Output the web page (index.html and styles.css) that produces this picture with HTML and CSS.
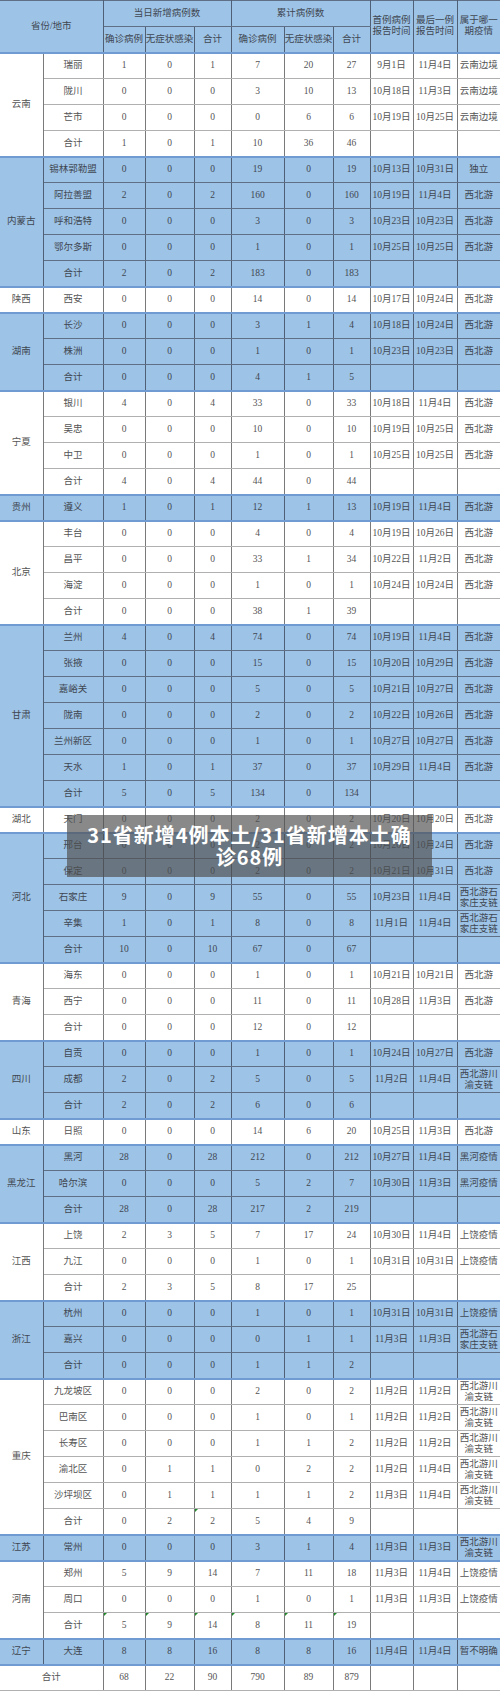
FILE: index.html
```html
<!DOCTYPE html>
<html lang="zh-CN">
<head>
<meta charset="utf-8">
<title>31省新增4例本土</title>
<link rel="stylesheet" href="styles.css">
</head>
<body>
<table class="t">
<colgroup>
<col class="c1"><col class="c2"><col class="c3"><col class="c4"><col class="c5"><col class="c6"><col class="c7"><col class="c8"><col class="c9"><col class="c10"><col class="c11">
</colgroup>
<thead>
<tr class="b"><th colspan="2" rowspan="2">省份/地市</th><th colspan="3">当日新增病例数</th><th colspan="3">累计病例数</th><th rowspan="2">首例病例报告时间</th><th rowspan="2">最后一例报告时间</th><th rowspan="2">属于哪一期疫情</th></tr>
<tr class="b"><th>确诊病例</th><th>无症状感染</th><th>合计</th><th>确诊病例</th><th>无症状感染</th><th>合计</th></tr>
</thead>
<tbody>
<tr class="s"><td rowspan="4">云南</td><td>瑞丽</td><td>1</td><td>0</td><td>1</td><td>7</td><td>20</td><td>27</td><td>9月1日</td><td>11月4日</td><td>云南边境</td></tr>
<tr><td>陇川</td><td>0</td><td>0</td><td>0</td><td>3</td><td>10</td><td>13</td><td>10月18日</td><td>11月3日</td><td>云南边境</td></tr>
<tr><td>芒市</td><td>0</td><td>0</td><td>0</td><td>0</td><td>6</td><td>6</td><td>10月19日</td><td>10月25日</td><td>云南边境</td></tr>
<tr><td>合计</td><td>1</td><td>0</td><td>1</td><td>10</td><td>36</td><td>46</td><td></td><td></td><td></td></tr>

<tr class="b s"><td rowspan="5">内蒙古</td><td>锡林郭勒盟</td><td>0</td><td>0</td><td>0</td><td>19</td><td>0</td><td>19</td><td>10月13日</td><td>10月31日</td><td>独立</td></tr>
<tr class="b"><td>阿拉善盟</td><td>2</td><td>0</td><td>2</td><td>160</td><td>0</td><td>160</td><td>10月19日</td><td>11月4日</td><td>西北游</td></tr>
<tr class="b"><td>呼和浩特</td><td>0</td><td>0</td><td>0</td><td>3</td><td>0</td><td>3</td><td>10月23日</td><td>10月23日</td><td>西北游</td></tr>
<tr class="b"><td>鄂尔多斯</td><td>0</td><td>0</td><td>0</td><td>1</td><td>0</td><td>1</td><td>10月25日</td><td>10月25日</td><td>西北游</td></tr>
<tr class="b"><td>合计</td><td>2</td><td>0</td><td>2</td><td>183</td><td>0</td><td>183</td><td></td><td></td><td></td></tr>

<tr class="s"><td>陕西</td><td>西安</td><td>0</td><td>0</td><td>0</td><td>14</td><td>0</td><td>14</td><td>10月17日</td><td>10月24日</td><td>西北游</td></tr>

<tr class="b s"><td rowspan="3">湖南</td><td>长沙</td><td>0</td><td>0</td><td>0</td><td>3</td><td>1</td><td>4</td><td>10月18日</td><td>10月24日</td><td>西北游</td></tr>
<tr class="b"><td>株洲</td><td>0</td><td>0</td><td>0</td><td>1</td><td>0</td><td>1</td><td>10月23日</td><td>10月23日</td><td>西北游</td></tr>
<tr class="b"><td>合计</td><td>0</td><td>0</td><td>0</td><td>4</td><td>1</td><td>5</td><td></td><td></td><td></td></tr>

<tr class="s"><td rowspan="4">宁夏</td><td>银川</td><td>4</td><td>0</td><td>4</td><td>33</td><td>0</td><td>33</td><td>10月18日</td><td>11月4日</td><td>西北游</td></tr>
<tr><td>吴忠</td><td>0</td><td>0</td><td>0</td><td>10</td><td>0</td><td>10</td><td>10月19日</td><td>10月25日</td><td>西北游</td></tr>
<tr><td>中卫</td><td>0</td><td>0</td><td>0</td><td>1</td><td>0</td><td>1</td><td>10月25日</td><td>10月25日</td><td>西北游</td></tr>
<tr><td>合计</td><td>4</td><td>0</td><td>4</td><td>44</td><td>0</td><td>44</td><td></td><td></td><td></td></tr>

<tr class="b s"><td>贵州</td><td>遵义</td><td>1</td><td>0</td><td>1</td><td>12</td><td>1</td><td>13</td><td>10月19日</td><td>11月4日</td><td>西北游</td></tr>

<tr class="s"><td rowspan="4">北京</td><td>丰台</td><td>0</td><td>0</td><td>0</td><td>4</td><td>0</td><td>4</td><td>10月19日</td><td>10月26日</td><td>西北游</td></tr>
<tr><td>昌平</td><td>0</td><td>0</td><td>0</td><td>33</td><td>1</td><td>34</td><td>10月22日</td><td>11月2日</td><td>西北游</td></tr>
<tr><td>海淀</td><td>0</td><td>0</td><td>0</td><td>1</td><td>0</td><td>1</td><td>10月24日</td><td>10月24日</td><td>西北游</td></tr>
<tr><td>合计</td><td>0</td><td>0</td><td>0</td><td>38</td><td>1</td><td>39</td><td></td><td></td><td></td></tr>

<tr class="b s"><td rowspan="7">甘肃</td><td>兰州</td><td>4</td><td>0</td><td>4</td><td>74</td><td>0</td><td>74</td><td>10月19日</td><td>11月4日</td><td>西北游</td></tr>
<tr class="b"><td>张掖</td><td>0</td><td>0</td><td>0</td><td>15</td><td>0</td><td>15</td><td>10月20日</td><td>10月29日</td><td>西北游</td></tr>
<tr class="b"><td>嘉峪关</td><td>0</td><td>0</td><td>0</td><td>5</td><td>0</td><td>5</td><td>10月21日</td><td>10月27日</td><td>西北游</td></tr>
<tr class="b"><td>陇南</td><td>0</td><td>0</td><td>0</td><td>2</td><td>0</td><td>2</td><td>10月22日</td><td>10月26日</td><td>西北游</td></tr>
<tr class="b"><td>兰州新区</td><td>0</td><td>0</td><td>0</td><td>1</td><td>0</td><td>1</td><td>10月27日</td><td>10月27日</td><td>西北游</td></tr>
<tr class="b"><td>天水</td><td>1</td><td>0</td><td>1</td><td>37</td><td>0</td><td>37</td><td>10月29日</td><td>11月4日</td><td>西北游</td></tr>
<tr class="b"><td>合计</td><td>5</td><td>0</td><td>5</td><td>134</td><td>0</td><td>134</td><td></td><td></td><td></td></tr>

<tr class="s"><td>湖北</td><td>天门</td><td>0</td><td>0</td><td>0</td><td>2</td><td>0</td><td>2</td><td>10月20日</td><td>10月20日</td><td>西北游</td></tr>

<tr class="b s"><td rowspan="5">河北</td><td>邢台</td><td>0</td><td>0</td><td>0</td><td>2</td><td>0</td><td>2</td><td>10月20日</td><td>10月24日</td><td>西北游</td></tr>
<tr class="b"><td>保定</td><td>0</td><td>0</td><td>0</td><td>2</td><td>0</td><td>2</td><td>10月21日</td><td>10月31日</td><td>西北游</td></tr>
<tr class="b"><td>石家庄</td><td>9</td><td>0</td><td>9</td><td>55</td><td>0</td><td>55</td><td>10月23日</td><td>11月4日</td><td>西北游石家庄支链</td></tr>
<tr class="b"><td>辛集</td><td>1</td><td>0</td><td>1</td><td>8</td><td>0</td><td>8</td><td>11月1日</td><td>11月4日</td><td>西北游石家庄支链</td></tr>
<tr class="b"><td>合计</td><td>10</td><td>0</td><td>10</td><td>67</td><td>0</td><td>67</td><td></td><td></td><td></td></tr>

<tr class="s"><td rowspan="3">青海</td><td>海东</td><td>0</td><td>0</td><td>0</td><td>1</td><td>0</td><td>1</td><td>10月21日</td><td>10月21日</td><td>西北游</td></tr>
<tr><td>西宁</td><td>0</td><td>0</td><td>0</td><td>11</td><td>0</td><td>11</td><td>10月28日</td><td>11月3日</td><td>西北游</td></tr>
<tr><td>合计</td><td>0</td><td>0</td><td>0</td><td>12</td><td>0</td><td>12</td><td></td><td></td><td></td></tr>

<tr class="b s"><td rowspan="3">四川</td><td>自贡</td><td>0</td><td>0</td><td>0</td><td>1</td><td>0</td><td>1</td><td>10月24日</td><td>10月27日</td><td>西北游</td></tr>
<tr class="b"><td>成都</td><td>2</td><td>0</td><td>2</td><td>5</td><td>0</td><td>5</td><td>11月2日</td><td>11月4日</td><td>西北游川渝支链</td></tr>
<tr class="b"><td>合计</td><td>2</td><td>0</td><td>2</td><td>6</td><td>0</td><td>6</td><td></td><td></td><td></td></tr>

<tr class="s"><td>山东</td><td>日照</td><td>0</td><td>0</td><td>0</td><td>14</td><td>6</td><td>20</td><td>10月25日</td><td>11月3日</td><td>西北游</td></tr>

<tr class="b s"><td rowspan="3">黑龙江</td><td>黑河</td><td>28</td><td>0</td><td>28</td><td>212</td><td>0</td><td>212</td><td>10月27日</td><td>11月4日</td><td>黑河疫情</td></tr>
<tr class="b"><td>哈尔滨</td><td>0</td><td>0</td><td>0</td><td>5</td><td>2</td><td>7</td><td>10月30日</td><td>11月3日</td><td>黑河疫情</td></tr>
<tr class="b"><td>合计</td><td>28</td><td>0</td><td>28</td><td>217</td><td>2</td><td>219</td><td></td><td></td><td></td></tr>

<tr class="s"><td rowspan="3">江西</td><td>上饶</td><td>2</td><td>3</td><td>5</td><td>7</td><td>17</td><td>24</td><td>10月30日</td><td>11月4日</td><td>上饶疫情</td></tr>
<tr><td>九江</td><td>0</td><td>0</td><td>0</td><td>1</td><td>0</td><td>1</td><td>10月31日</td><td>10月31日</td><td>上饶疫情</td></tr>
<tr><td>合计</td><td>2</td><td>3</td><td>5</td><td>8</td><td>17</td><td>25</td><td></td><td></td><td></td></tr>

<tr class="b s"><td rowspan="3">浙江</td><td>杭州</td><td>0</td><td>0</td><td>0</td><td>1</td><td>0</td><td>1</td><td>10月31日</td><td>10月31日</td><td>上饶疫情</td></tr>
<tr class="b"><td>嘉兴</td><td>0</td><td>0</td><td>0</td><td>0</td><td>1</td><td>1</td><td>11月3日</td><td>11月3日</td><td>西北游石家庄支链</td></tr>
<tr class="b"><td>合计</td><td>0</td><td>0</td><td>0</td><td>1</td><td>1</td><td>2</td><td></td><td></td><td></td></tr>

<tr class="s"><td rowspan="6">重庆</td><td>九龙坡区</td><td>0</td><td>0</td><td>0</td><td>2</td><td>0</td><td>2</td><td>11月2日</td><td>11月2日</td><td>西北游川渝支链</td></tr>
<tr><td>巴南区</td><td>0</td><td>0</td><td>0</td><td>1</td><td>0</td><td>1</td><td>11月2日</td><td>11月2日</td><td>西北游川渝支链</td></tr>
<tr><td>长寿区</td><td>0</td><td>0</td><td>0</td><td>1</td><td>1</td><td>2</td><td>11月2日</td><td>11月2日</td><td>西北游川渝支链</td></tr>
<tr><td>渝北区</td><td>0</td><td>1</td><td>1</td><td>0</td><td>2</td><td>2</td><td>11月2日</td><td>11月4日</td><td>西北游川渝支链</td></tr>
<tr><td>沙坪坝区</td><td>0</td><td>1</td><td>1</td><td>1</td><td>1</td><td>2</td><td>11月3日</td><td>11月4日</td><td>西北游川渝支链</td></tr>
<tr><td>合计</td><td>0</td><td>2</td><td class="g">2</td><td>5</td><td>4</td><td>9</td><td></td><td></td><td></td></tr>

<tr class="b s"><td>江苏</td><td>常州</td><td>0</td><td>0</td><td>0</td><td>3</td><td>1</td><td>4</td><td>11月3日</td><td>11月3日</td><td>西北游川渝支链</td></tr>

<tr class="s"><td rowspan="3">河南</td><td>郑州</td><td>5</td><td>9</td><td>14</td><td>7</td><td>11</td><td>18</td><td>11月3日</td><td>11月4日</td><td>上饶疫情</td></tr>
<tr><td>周口</td><td>0</td><td>0</td><td>0</td><td>1</td><td>0</td><td>1</td><td>11月3日</td><td>11月3日</td><td>上饶疫情</td></tr>
<tr><td>合计</td><td class="g">5</td><td class="g">9</td><td class="g">14</td><td class="g">8</td><td class="g">11</td><td class="g">19</td><td></td><td></td><td></td></tr>

<tr class="b s"><td>辽宁</td><td>大连</td><td>8</td><td>8</td><td>16</td><td>8</td><td>8</td><td>16</td><td>11月4日</td><td>11月4日</td><td>暂不明确</td></tr>

<tr class="s"><td colspan="2">合计</td><td>68</td><td>22</td><td>90</td><td>790</td><td>89</td><td>879</td><td></td><td></td><td></td></tr>
</tbody>
</table>
<div class="cap">31省新增4例本土/31省新增本土确<br>诊68例</div>
</body>
</html>
```

FILE: styles.css
```css
* { box-sizing: border-box; }
body {
  margin: 0;
  width: 500px;
  background: #fff;
  position: relative;
}
.t {
  width: 500px;
  border-collapse: collapse;
  table-layout: fixed;
  font-family: "Liberation Serif", "Noto Sans CJK SC", serif;
  font-size: 9.5px;
  color: #555;
}
.c1 { width: 43px; }
.c2 { width: 60px; }
.c3 { width: 42px; }
.c4 { width: 49px; }
.c5 { width: 37px; }
.c6 { width: 53px; }
.c7 { width: 49px; }
.c8 { width: 37px; }
.c9 { width: 43px; }
.c10 { width: 44px; }
.c11 { width: 43px; }
.t td, .t th {
  height: 26px;
  padding: 0;
  text-align: center;
  vertical-align: middle;
  font-weight: normal;
  line-height: 11px;
  border-top: 1px solid #b0b0b0;
  border-bottom: 1px solid #b0b0b0;
  border-left: 1px solid #7a7a7a;
  border-right: 1px solid #7a7a7a;
}
.t tr > :first-child { border-left: 0; }
.t tr > :last-child { border-right: 0; }
.t tr.b > td, .t tr.b > th {
  background: #9dc3e6;
  color: #3f4752;
  border-top-color: #5f6f85;
  border-bottom-color: #5f6f85;
  border-left-color: #4f5f75;
  border-right-color: #4f5f75;
}
.t tr.s > td {
  border-top: 2px solid #6f9bd2;
}
.t td.g { position: relative; }
.t td.g::before {
  content: "";
  position: absolute;
  left: 0;
  top: 0;
  border-top: 3px solid #1f8a2a;
  border-right: 3px solid transparent;
}
.cap {
  position: absolute;
  left: 67px;
  top: 815px;
  width: 365px;
  height: 62px;
  padding-top: 9px;
  background: rgba(81, 81, 81, 0.68);
  color: #fff;
  font-family: "Noto Sans CJK SC", sans-serif;
  font-weight: bold;
  font-size: 20px;
  line-height: 22px;
  letter-spacing: 1px;
  text-align: center;
}
```
